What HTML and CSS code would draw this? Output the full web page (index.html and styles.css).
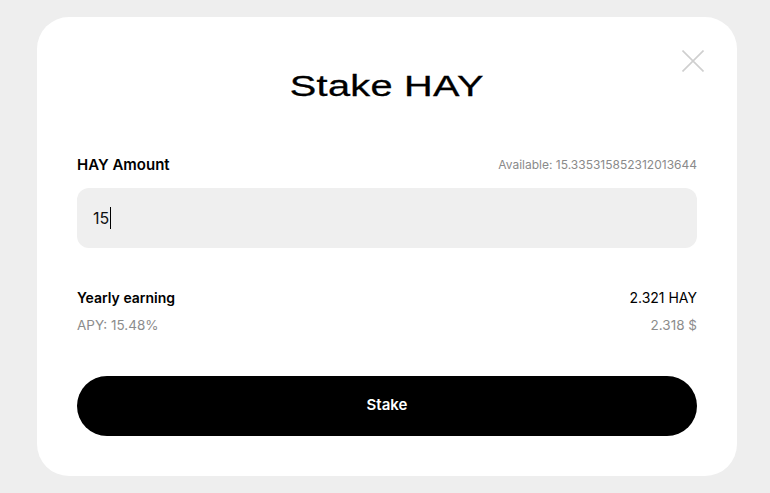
FILE: index.html
```html
<!DOCTYPE html>
<html>
<head>
<meta charset="utf-8">
<link rel="stylesheet" href="styles.css">
</head>
<body>
<div class="card">
  <button class="close" aria-label="Close">
    <svg width="22" height="22" viewBox="0 0 22 22"><path d="M0.5 0.5 L21.5 21.5 M21.5 0.5 L0.5 21.5" stroke="#cfcfcf" stroke-width="1.6" fill="none"/></svg>
  </button>
  <h1 class="title"><span>Stake HAY</span></h1>
  <div class="row label-row">
    <span class="label amount">HAY Amount</span>
    <span class="avail">Available: 15.335315852312013644</span>
  </div>
  <div class="input">15<span class="caret"></span></div>
  <div class="row earn-row">
    <span class="label">Yearly earning</span>
    <span class="value">2.321 HAY</span>
  </div>
  <div class="row sub-row">
    <span class="muted">APY: 15.48%</span>
    <span class="muted">2.318 $</span>
  </div>
  <button class="stake">Stake</button>
</div>
</body>
</html>
```
FILE: styles.css
```css
html, body {
  margin: 0;
  padding: 0;
}
body {
  background: #eeeeee;
  font-family: Inter, "Liberation Sans", sans-serif;
  color: #000;
  height: 493px;
  overflow: hidden;
}
.card {
  position: relative;
  box-sizing: border-box;
  margin: 17px 0 0 37px;
  width: 700px;
  height: 459px;
  background: #fff;
  border-radius: 32px;
  padding: 0 40px 40px;
  display: flex;
  flex-direction: column;
}
.close {
  position: absolute;
  top: 33px;
  right: 33px;
  width: 22px;
  height: 22px;
  padding: 0;
  border: 0;
  background: none;
  display: block;
}
.close svg { display: block; }
.title {
  margin: 50px 0 0;
  height: 38px;
  line-height: 38px;
  font-family: "Liberation Sans", sans-serif;
  font-weight: 400;
  font-size: 29px;
  text-align: center;
  -webkit-text-stroke: 0.3px #000;
}
.title span {
  display: inline-block;
  transform: scaleX(1.37);
  letter-spacing: 0.2px;
}
.row {
  display: flex;
  justify-content: space-between;
  align-items: center;
  height: 20px;
  line-height: 20px;
}
.label-row { margin-top: 50px; }
.label {
  font-size: 14px;
  font-weight: 600;
}
.label.amount { font-size: 15px; }
.avail {
  font-size: 12px;
  color: #8a8a8a;
}
.input {
  margin-top: 13px;
  height: 60px;
  box-sizing: border-box;
  background: #efefef;
  border-radius: 12px;
  padding: 0 16px;
  display: flex;
  align-items: center;
  font-size: 16px;
  color: #111;
}
.caret {
  display: inline-block;
  width: 1px;
  height: 22px;
  background: #000;
  margin-left: 1px;
}
.earn-row { margin-top: 40px; }
.value { font-size: 14px; }
.sub-row { margin-top: 7px; }
.muted {
  font-size: 13.5px;
  color: #8c8c8c;
}
.stake {
  margin-top: 41px;
  height: 60px;
  border: 0;
  border-radius: 30px;
  background: #000;
  color: #fff;
  font-family: Inter, "Liberation Sans", sans-serif;
  font-weight: 600;
  font-size: 15px;
  padding: 0 0 4px;
}
```
